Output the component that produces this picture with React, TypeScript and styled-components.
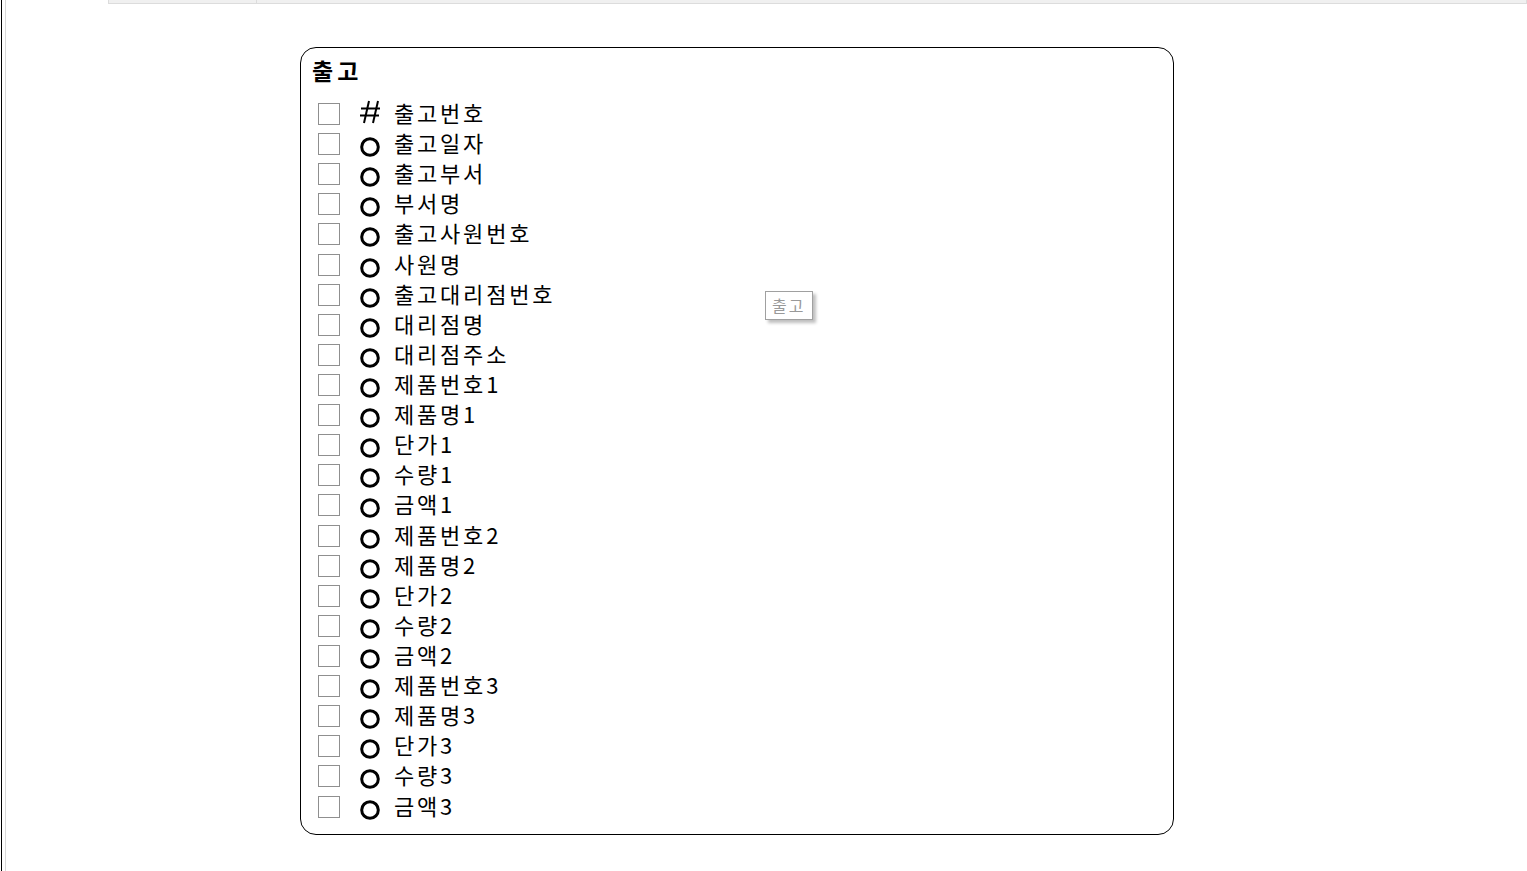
import { createGlobalStyle, styled } from 'styled-components';

const GlobalStyle = createGlobalStyle`
  html, body {
    margin: 0;
    padding: 0;
    background: #ffffff;
    font-family: 'Noto Sans CJK KR', 'Noto Sans', sans-serif;
    color: #000;
  }
`;

const Frame = styled.div`
  display: flex;
  height: 871px;
  overflow: hidden;
`;

const Rail = styled.div`
  width: 3px;
  margin-left: 1px;
  border-left: 1px solid #000;
  border-right: 1px solid #d8d8d8;
  flex-shrink: 0;
`;

const Main = styled.div`
  flex: 1;
  display: flex;
  flex-direction: column;
`;

const TopBar = styled.div`
  display: flex;
  height: 3px;
  margin-left: 102px;
  background: #f0f0f0;
  border-bottom: 1px solid #dcdcdc;
  border-left: 1px solid #dcdcdc;
`;

const TopCell = styled.div<{ $w?: number }>`
  width: ${(p) => (p.$w ? `${p.$w}px` : 'auto')};
  flex: ${(p) => (p.$w ? 'none' : '1')};
  border-right: 1px solid #dcdcdc;
`;

const Card = styled.section`
  position: relative;
  width: 874px;
  margin: 43px 0 0 294px;
  padding: 7px 0 11px 11px;
  border: 1px solid #000;
  border-radius: 16px;
  box-sizing: border-box;
  height: 788px;
`;

const Title = styled.h2`
  margin: 0;
  font-size: 23px;
  font-weight: 700;
  line-height: 30px;
  letter-spacing: 4px;
`;

const List = styled.ul`
  list-style: none;
  margin: 12px 0 0 0;
  padding: 0;
`;

const Row = styled.li`
  display: flex;
  align-items: flex-start;
  height: 30.12px;
`;

const Check = styled.span`
  width: 20px;
  height: 20px;
  margin: 6px 0 0 6px;
  border: 1px solid #8f8f8f;
  flex-shrink: 0;
`;

const IconBox = styled.span<{ $top: number }>`
  width: 22px;
  height: 22px;
  margin: ${(p) => p.$top}px 0 0 19px;
  display: flex;
  align-items: center;
  justify-content: center;
  flex-shrink: 0;
`;

const Label = styled.span`
  margin-left: 13px;
  font-size: 22px;
  line-height: 30px;
  letter-spacing: 2.8px;
  white-space: nowrap;
`;

const Tip = styled.div`
  position: absolute;
  left: 464px;
  top: 243px;
  padding: 0 7px 0 6px;
  height: 27px;
  line-height: 26px;
  font-size: 16px;
  color: #999;
  background: #fff;
  border: 1px solid #a0a0a0;
  box-shadow: 3px 3px 3px rgba(0, 0, 0, 0.25);
  letter-spacing: 2px;
`;

const fields = [
  '출고번호', '출고일자', '출고부서', '부서명', '출고사원번호', '사원명',
  '출고대리점번호', '대리점명', '대리점주소',
  '제품번호1', '제품명1', '단가1', '수량1', '금액1',
  '제품번호2', '제품명2', '단가2', '수량2', '금액2',
  '제품번호3', '제품명3', '단가3', '수량3', '금액3',
];

const HashIcon = () => (
  <svg width='22' height='24' viewBox='0 0 22 24' fill='none' stroke='#000' strokeWidth='2'>
    <line x1='10' y1='1' x2='5' y2='23' />
    <line x1='19' y1='1' x2='14' y2='23' />
    <line x1='2' y1='8.5' x2='21' y2='8.5' />
    <line x1='1' y1='15.5' x2='20' y2='15.5' />
  </svg>
);

const RingIcon = () => (
  <svg width='20' height='20' viewBox='0 0 20 20' fill='none' stroke='#000' strokeWidth='3'>
    <circle cx='10' cy='10' r='8.3' />
  </svg>
);

export default function App() {
  return (
    <>
      <GlobalStyle />
      <Frame>
        <Rail />
        <Main>
          <TopBar>
            <TopCell $w={147} />
            <TopCell />
          </TopBar>
          <Card>
            <Title>출고</Title>
            <List>
              {fields.map((f, i) => (
                <Row key={f}>
                  <Check />
                  <IconBox $top={i === 0 ? 4 : 9}>{i === 0 ? <HashIcon /> : <RingIcon />}</IconBox>
                  <Label>{f}</Label>
                </Row>
              ))}
            </List>
            <Tip>출고</Tip>
          </Card>
        </Main>
      </Frame>
    </>
  );
}
